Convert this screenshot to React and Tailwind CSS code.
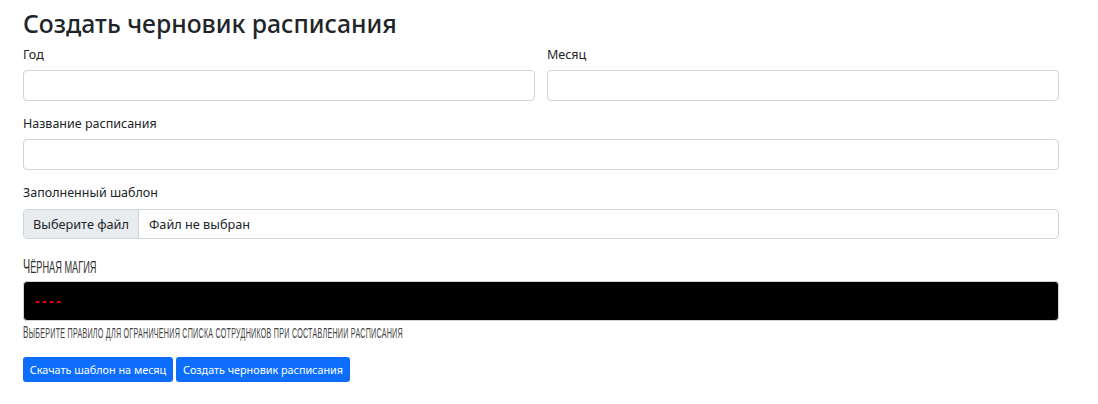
import React from 'react'

const inputClass = 'block w-full h-[31px] rounded-[4px] border border-[#ced4da] bg-white'
const narrow = "font-['Liberation_Sans_Narrow','Liberation_Sans',sans-serif] uppercase origin-left whitespace-nowrap"

function Field({ label, className = '' }) {
  return (
    <div className={className}>
      <label className="block h-[24px] mb-[4px] text-[12.5px] leading-[26px] text-[#212529]">{label}</label>
      <input type="text" className={inputClass} />
    </div>
  )
}

function App() {
  return (
    <div className="w-[1098px] h-[404px] bg-white pl-[23px] pr-[39px] pt-[5px] font-['Noto_Sans',sans-serif] text-[#212529]">
      <h2 className="h-[37px] text-[24.75px] leading-[37px] font-medium">Создать черновик расписания</h2>

      <div className="flex gap-[12px]">
        <Field label="Год" className="w-[512px]" />
        <Field label="Месяц" className="w-[512px]" />
      </div>

      <Field label="Название расписания" className="mt-[10px]" />

      <div className="mt-[10px]">
        <label className="block h-[24px] mb-[5px] text-[12.5px] leading-[26px]">Заполненный шаблон</label>
        <div className="flex h-[30px] rounded-[4px] border border-[#ced4da] overflow-hidden text-[12.7px] leading-[28px]">
          <span className="w-[115px] text-center bg-[#e9ecef] border-r border-[#ced4da]">Выберите файл</span>
          <span className="pl-[10px]">Файл не выбран</span>
        </div>
      </div>

      <div className={`mt-[14px] h-[26px] text-[17px] leading-[26px] text-[#333] scale-x-[0.54] ${narrow}`}>
        <span className="text-[20px]">Ч</span>ёрная магия
      </div>

      <div className="mt-[2px] h-[40px] rounded-[4px] border border-[#ced4da] bg-black pl-[11px] font-['Liberation_Sans',sans-serif] text-[14px] font-bold leading-[38px] text-[#f00]">
        <span className="tracking-[2.3px]">----</span>
      </div>

      <div className={`mt-[4px] h-[16px] text-[14px] leading-[16px] tracking-[0.5px] text-[#444] scale-x-[0.51] ${narrow}`}>
        <span className="text-[16px]">В</span>ыберите правило для ограничения списка сотрудников при составлении расписания
      </div>

      <div className="mt-[16px] flex gap-[3px]">
        <button className="w-[150px] h-[25px] rounded-[3px] bg-[#0d6efd] text-white text-[10.8px] leading-[25px]">Скачать шаблон на месяц</button>
        <button className="w-[174px] h-[25px] rounded-[3px] bg-[#0d6efd] text-white text-[10.8px] leading-[25px]">Создать черновик расписания</button>
      </div>
    </div>
  )
}

export default App
